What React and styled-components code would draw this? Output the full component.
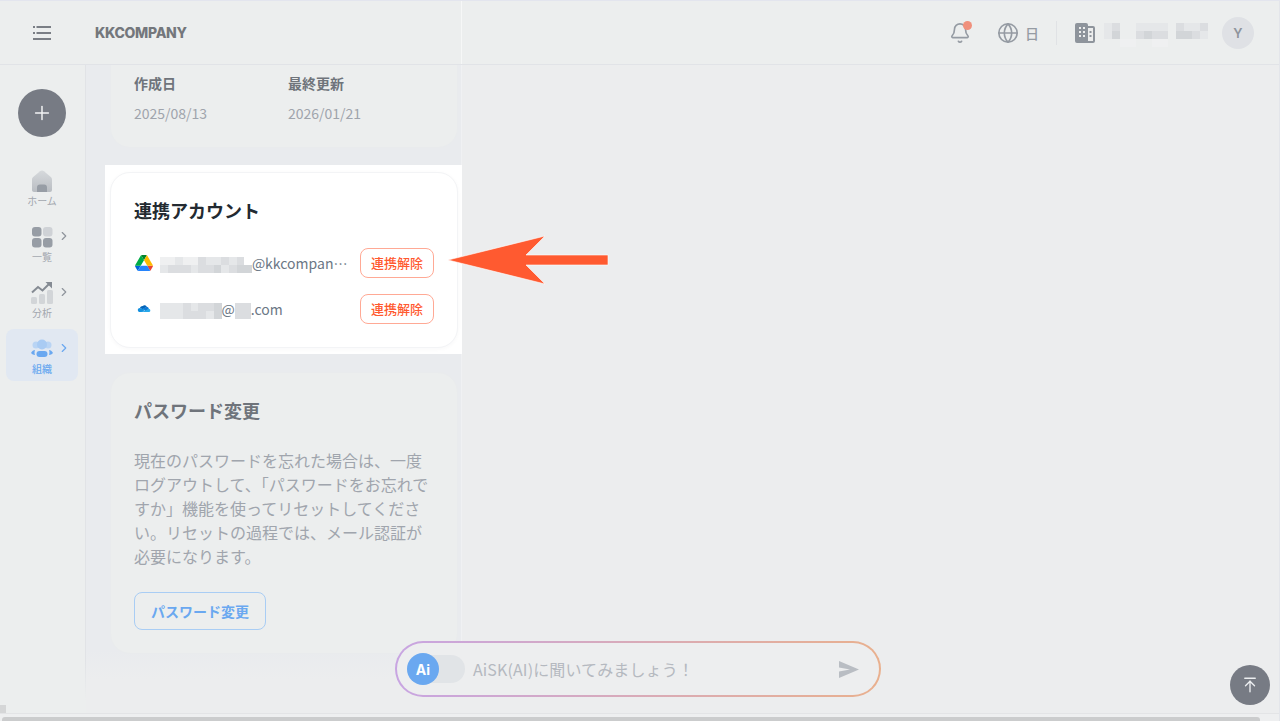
import React from 'react';
import styled, { createGlobalStyle } from 'styled-components';
import { ArrowUpToLine, Bell, ChevronRight, Globe, Plus } from 'lucide-react';

const GlobalStyle = createGlobalStyle`
    html, body {
        margin: 0;
        padding: 0;
        height: 100%;
        overflow: hidden;
        background: #eceeee;
        font-family: 'Noto Sans CJK JP', 'Noto Sans', sans-serif;
    }
    * {
        box-sizing: border-box;
    }
`;

const Page = styled.div`
    position: relative;
    height: 100vh;
    display: flex;
    flex-direction: column;
    overflow: hidden;
    border-top: 1px solid #e3e5ee;
    border-right: 1px solid #e3e5ea;
`;

// Header
const Header = styled.header`
    flex: none;
    height: 64px;
    display: flex;
    align-items: center;
    padding: 0 25px 0 33px;
    background: #eceeee;
    border-bottom: 1px solid #e1e3e7;
`;

const HeaderSeam = styled.div`
    position: absolute;
    left: 461px;
    top: 0;
    width: 1px;
    height: 63px;
    background: #f6f7f7;
`;

const Logo = styled.div`
    margin-left: 44px;
    font-family: 'Inter', sans-serif;
    font-weight: 800;
    font-size: 14px;
    letter-spacing: -0.3px;
    color: #74777c;
`;

const HeaderRight = styled.div`
    margin-left: auto;
    display: flex;
    align-items: center;
`;

const BellWrap = styled.div`
    position: relative;
    width: 22px;
    height: 22px;
    color: #959ba3;
`;

const BellDot = styled.span`
    position: absolute;
    top: -1px;
    right: -1px;
    width: 9px;
    height: 9px;
    border-radius: 50%;
    background: #f0907c;
`;

const LangBox = styled.div`
    display: flex;
    align-items: center;
    gap: 6px;
    margin-left: 26px;
    color: #959ba3;
    font-size: 14px;
    font-weight: 500;
`;

const Divider = styled.div`
    width: 1px;
    height: 24px;
    margin: 0 18px 0 17px;
    background: #e0e2e5;
`;

const CompanyName = styled.div`
    padding-top: 4px;
    line-height: 0;
`;

const Avatar = styled.div`
    width: 32px;
    height: 32px;
    margin-left: 14px;
    border-radius: 50%;
    background: #dfe1e5;
    color: #8f949c;
    font-family: 'Inter', sans-serif;
    font-size: 13px;
    font-weight: 600;
    display: flex;
    align-items: center;
    justify-content: center;
`;

// Blurred out parts
const MosaicGrid = styled.span`
    display: inline-grid;
    grid-template-columns: repeat(${props => props.$cols}, ${props => props.$cell}px);
    grid-auto-rows: ${props => props.$cellHeight}px;
    vertical-align: middle;
    margin-left: ${props => props.$gap || 0}px;
`;

const SHADES = { 0: 'transparent', 1: '#eff0f1', 2: '#e5e7e9', 3: '#dbdde0', 4: '#d2d5d8' };

const MosaicCell = styled.span`
    background: ${props => SHADES[props.$shade]};
`;

const Mosaic = ({ rows, cell = 8, cellHeight = 8, gap }) => (
    <MosaicGrid $cols={rows[0].length} $cell={cell} $cellHeight={cellHeight} $gap={gap}>
        {rows.join('').split('').map((shade, i) => (
            <MosaicCell key={i} $shade={shade} />
        ))}
    </MosaicGrid>
);

// Body
const Body = styled.div`
    flex: 1;
    min-height: 0;
    display: flex;
    background: #ecedee;
`;

const Sidebar = styled.nav`
    flex: none;
    width: 86px;
    padding-top: 24px;
    background: #eceeee;
    border-right: 1px solid;
    border-image: linear-gradient(to bottom, #e1e3e6 0, #e1e3e6 92%, #eceeee 98%) 1;
    display: flex;
    flex-direction: column;
`;

const AddButton = styled.button`
    width: 48px;
    height: 48px;
    margin: 0 0 24px 18px;
    padding: 0;
    border: none;
    border-radius: 50%;
    background: #777b84;
    color: #f3f4f5;
    display: flex;
    align-items: center;
    justify-content: center;
`;

const NavList = styled.div`
    display: flex;
    flex-direction: column;
    gap: 4px;
    padding-left: 6px;
`;

const NavItem = styled.div`
    position: relative;
    width: 72px;
    height: 52px;
    border-radius: 8px;
    background: ${props => (props.$active ? '#e1e8f2' : 'transparent')};
    display: flex;
    flex-direction: column;
    align-items: center;
    padding-top: 8px;
    color: ${props => (props.$active ? '#6aa8f0' : '#a3a7ae')};
`;

const NavIcon = styled.svg`
    display: block;
    width: 24px;
    height: 24px;
`;

const NavLabel = styled.span`
    margin-top: 1px;
    font-size: 10px;
    line-height: 14px;
    font-weight: ${props => (props.$active ? 500 : 400)};
`;

const NavChevron = styled(ChevronRight)`
    position: absolute;
    top: 12px;
    right: 7px;
    width: 14px;
    height: 14px;
    color: ${props => (props.$active ? '#6aa8f0' : '#8f949c')};
`;

const Column = styled.main`
    flex: none;
    width: 376px;
    height: 615px;
    background: linear-gradient(to bottom, #e9ebee 0, #e9ebee 95%, #ecedee 100%);
    border-right: 1px solid #f0f1f3;
    padding: 0 3px 0 24px;
    display: flex;
    flex-direction: column;
`;

const Card = styled.section`
    width: 348px;
    background: #eceeee;
    border: 1px solid #e9ebed;
    border-radius: 20px;
    padding: 24px 23px 23px;
`;

const MetaCard = styled(Card)`
    border-top: none;
    border-radius: 0 0 20px 20px;
    padding-top: 8px;
    padding-bottom: 24px;
    margin-bottom: 17px;
    display: grid;
    grid-template-columns: 150px 150px;
    column-gap: 4px;
`;

const MetaLabel = styled.div`
    font-size: 14px;
    line-height: 20px;
    font-weight: 700;
    color: #6f747b;
`;

const MetaValue = styled.div`
    margin-top: 10px;
    font-size: 14px;
    line-height: 20px;
    color: #9fa4ac;
`;

const Highlight = styled.div`
    margin: 0 0 18px -5px;
    width: 357px;
    padding: 7px 4px 6px 5px;
    background: #ffffff;
`;

const AccountCard = styled(Card)`
    background: #ffffff;
    border-color: #f3f4f6;
    box-shadow: 0 1px 4px rgba(30, 40, 60, 0.03);
`;

const CardTitle = styled.h2`
    margin: 0 0 25px;
    font-size: 18px;
    line-height: 26px;
    font-weight: 700;
    color: ${props => (props.$muted ? '#6f747b' : '#232a31')};
`;

const AccountList = styled.div`
    display: flex;
    flex-direction: column;
    gap: 16px;
`;

const AccountRow = styled.div`
    display: flex;
    align-items: center;
    height: 30px;
`;

const ServiceIcon = styled.svg`
    flex: none;
    width: 18px;
    height: 16px;
    margin: 0 7px 0 1px;
`;

const AccountMail = styled.div`
    width: 188px;
    font-size: 14px;
    line-height: 20px;
    color: #6b7785;
    white-space: nowrap;
    overflow: hidden;
    text-overflow: ellipsis;
`;

const UnlinkButton = styled.button`
    flex: none;
    width: 74px;
    height: 30px;
    margin-left: 12px;
    padding: 0;
    border: 1px solid #ffa995;
    border-radius: 8px;
    background: #ffffff;
    color: #ff5a30;
    font-family: inherit;
    font-size: 13px;
    font-weight: 500;
    line-height: 26px;
`;

const Description = styled.p`
    margin: 0 0 24px;
    width: 300px;
    font-size: 16px;
    line-height: 24px;
    color: #a0a5ad;
`;

const OutlineButton = styled.button`
    display: block;
    width: 132px;
    height: 38px;
    padding: 0;
    border: 1px solid #a9cdf4;
    border-radius: 8px;
    background: transparent;
    color: #6aa8f0;
    font-family: inherit;
    font-size: 14px;
    font-weight: 700;
`;

// Bottom scroll bar
const ScrollTrack = styled.div`
    flex: none;
    height: 8px;
    border-top: 1px solid #e3e4e6;
    background: #eeeff0;
    padding: 3px 0 0 2px;
`;

const ScrollThumb = styled.div`
    width: 1258px;
    height: 5px;
    border-radius: 3px 3px 0 0;
    background: #cbcccd;
`;

const ScrollCorner = styled.div`
    position: absolute;
    left: 0;
    top: 704px;
    width: 6px;
    height: 8px;
    background: #d5d6d7;
`;

// Things that float over the page
const Annotation = styled.svg`
    position: absolute;
    left: 448px;
    top: 232px;
    width: 164px;
    height: 54px;
`;

const ChatBar = styled.div`
    position: absolute;
    left: 395px;
    top: 640px;
    width: 486px;
    height: 56px;
    padding: 2px;
    border-radius: 28px;
    background: linear-gradient(90deg, #c8a5e2, #e9b08e);
`;

const ChatInner = styled.div`
    width: 100%;
    height: 100%;
    border-radius: 26px;
    background: #edeeef;
    display: flex;
    align-items: center;
    padding: 0 20px 0 10px;
`;

const AiToggle = styled.div`
    flex: none;
    width: 58px;
    height: 28px;
    border-radius: 14px;
    background: #e1e4e7;
    display: flex;
    align-items: center;
`;

const AiKnob = styled.div`
    width: 32px;
    height: 32px;
    border-radius: 50%;
    background: #6aa8f0;
    color: #ffffff;
    font-family: 'Inter', sans-serif;
    font-size: 14px;
    font-weight: 700;
    display: flex;
    align-items: center;
    justify-content: center;
`;

const ChatPlaceholder = styled.div`
    flex: 1;
    margin-left: 8px;
    font-size: 16px;
    letter-spacing: 0.12px;
    color: #b5b9c0;
`;

const ScrollTopButton = styled.button`
    position: absolute;
    left: 1230px;
    top: 664px;
    width: 40px;
    height: 40px;
    padding: 0;
    border: none;
    border-radius: 50%;
    background: #777b84;
    color: #eceef0;
    display: flex;
    align-items: center;
    justify-content: center;
`;

const MenuIcon = () => (
    <svg width="18" height="14" viewBox="0 0 18 14" fill="#7a7e85">
        <rect x="0" y="0" width="2" height="2" />
        <rect x="3.5" y="0" width="14.5" height="2" />
        <rect x="0" y="6" width="2" height="2" />
        <rect x="3.5" y="6" width="14.5" height="2" />
        <rect x="0" y="12" width="18" height="2" />
    </svg>
);

const BuildingIcon = () => (
    <svg width="20" height="20" viewBox="0 0 20 20">
        <path d="M2 0h9a2 2 0 0 1 2 2v1h5a2 2 0 0 1 2 2v13a2 2 0 0 1-2 2H2a2 2 0 0 1-2-2V2a2 2 0 0 1 2-2z" fill="#8e949c" />
        <g fill="#eceded">
            <rect x="4" y="4" width="2" height="2" />
            <rect x="8" y="4" width="2" height="2" />
            <rect x="4" y="8" width="2" height="2" />
            <rect x="8" y="8" width="2" height="2" />
            <rect x="4" y="12" width="2" height="2" />
            <rect x="8" y="12" width="2" height="2" />
            <rect x="13" y="5" width="5" height="13" />
        </g>
        <g fill="#8e949c">
            <rect x="14.5" y="8" width="2" height="2" />
            <rect x="14.5" y="12" width="2" height="2" />
        </g>
    </svg>
);

const HomeIcon = () => (
    <NavIcon viewBox="0 0 24 24">
        <defs>
            <linearGradient id="homeFill" x1="0" y1="0" x2="0" y2="1">
                <stop offset="0" stopColor="#d6d9dc" />
                <stop offset="1" stopColor="#b9bdc2" />
            </linearGradient>
        </defs>
        <path
            d="M2 10.500C2 9.500 2.400 8.800 3.200 8.100L10 2.300C11.200 1.300 12.800 1.300 14 2.300L20.800 8.100C21.600 8.800 22 9.500 22 10.500V21C22 22.100 21.100 23 20 23H4C2.900 23 2 22.100 2 21z"
            fill="url(#homeFill)"
        />
        <path d="M7 23v-4.500a3 3 0 0 1 3-3h4a3 3 0 0 1 3 3V23z" fill="#979da5" />
    </NavIcon>
);

const GridIcon = () => (
    <NavIcon viewBox="0 0 24 24">
        <rect x="2" y="2" width="9.5" height="9.5" rx="3" fill="#979da5" />
        <rect x="13" y="2" width="9.5" height="9.5" rx="3" fill="#cfd2d6" />
        <rect x="2" y="13" width="9.5" height="9.5" rx="3" fill="#979da5" />
        <rect x="13" y="13" width="9.5" height="9.5" rx="3" fill="#979da5" />
    </NavIcon>
);

const ChartIcon = () => (
    <NavIcon viewBox="0 0 24 24">
        <rect x="1" y="16" width="6" height="7" rx="1.5" fill="#d2d5d8" />
        <rect x="9" y="13" width="6" height="10" rx="1.5" fill="#d2d5d8" />
        <rect x="17" y="9" width="6" height="14" rx="1.5" fill="#d2d5d8" />
        <path d="M2 11.500 8 6l4.500 3.500L19 3" fill="none" stroke="#858b93" strokeWidth="2" />
        <path d="M15.500 1H22v6.500z" fill="#858b93" />
    </NavIcon>
);

const TeamIcon = () => (
    <NavIcon viewBox="0 0 24 24">
        <circle cx="6" cy="8" r="3.500" fill="#b9d4f4" />
        <circle cx="18" cy="8" r="3.500" fill="#b9d4f4" />
        <circle cx="12" cy="7.500" r="5" fill="#a9cbf3" />
        <path d="M1 16c1-2 2.500-3 4-3-.6 1.600-.6 3.400 0 5-1.600 0-3-.8-4-2zM23 16c-1-2-2.500-3-4-3 .6 1.600.6 3.400 0 5 1.600 0 3-.8 4-2z" fill="#6aa8f0" />
        <rect x="6.500" y="14" width="11" height="6" rx="3" fill="#6aa8f0" />
    </NavIcon>
);

const DriveIcon = () => (
    <ServiceIcon viewBox="0 0 87.3 78">
        <path d="m6.6 66.85 3.85 6.65c.8 1.4 1.95 2.5 3.3 3.3l13.75-23.8h-27.5c0 1.55.4 3.1 1.2 4.5z" fill="#0066da" />
        <path d="m43.65 25-13.75-23.8c-1.35.8-2.5 1.9-3.3 3.3l-25.4 44a9.06 9.06 0 0 0 -1.2 4.5h27.5z" fill="#00ac47" />
        <path d="m73.55 76.8c1.35-.8 2.5-1.9 3.3-3.3l1.6-2.75 7.65-13.25c.8-1.4 1.2-2.95 1.2-4.5h-27.502l5.852 11.5z" fill="#ea4335" />
        <path d="m43.65 25 13.75-23.8c-1.35-.8-2.9-1.2-4.5-1.2h-18.5c-1.6 0-3.15.45-4.5 1.2z" fill="#00832d" />
        <path d="m59.8 53h-32.3l-13.75 23.8c1.35.8 2.9 1.2 4.5 1.2h50.8c1.6 0 3.15-.45 4.5-1.2z" fill="#2684fc" />
        <path d="m73.4 26.5-12.7-22c-.8-1.4-1.95-2.5-3.3-3.3l-13.75 23.8 16.15 28h27.45c0-1.55-.4-3.1-1.2-4.5z" fill="#ffba00" />
    </ServiceIcon>
);

const OneDriveIcon = () => (
    <ServiceIcon viewBox="-2 -1.5 22 19">
        <path d="M7.500 4.200c1.700-1.400 4-.8 4.800 1l-5 3-3.200-1.300c.3-1.700 1.800-2.800 3.400-2.700z" fill="#0364b8" />
        <path d="M7.300 7.600 11.800 5.300c1.500-.2 2.800.8 3.100 2.300l-3.600 3.400z" fill="#0f78d4" />
        <path d="M3.900 6.900c-1.400 0-2.500 1.100-2.500 2.400 0 1.500 1.100 2.500 2.500 2.500h3.300l3-3.200z" fill="#1490df" />
        <path d="M14.800 7.600c1.100 0 1.900 1 1.900 2.100 0 1.200-.9 2.100-2.100 2.100H4.300c4-1 7.500-2.400 10.500-4.200z" fill="#28a8ea" />
    </ServiceIcon>
);

const SendIcon = () => (
    <svg width="20" height="17" viewBox="0 0 20 17" fill="#b9bdc3">
        <path d="M0 0 20 8.500 0 17 0 10.500 11 8.500 0 6.500z" />
    </svg>
);

const App = () => {
    return (
        <Page>
            <GlobalStyle />
            <Header>
                <MenuIcon />
                <Logo>KKCOMPANY</Logo>
                <HeaderRight>
                    <BellWrap>
                        <Bell size={22} strokeWidth={1.8} />
                        <BellDot />
                    </BellWrap>
                    <LangBox>
                        <Globe size={22} strokeWidth={1.8} />
                        <span>日</span>
                    </LangBox>
                    <Divider />
                    <BuildingIcon />
                    <CompanyName>
                        <Mosaic
                            gap={9}
                            rows={['2300222203223', '2400343304432', '0011001100000']}
                        />
                    </CompanyName>
                    <Avatar>Y</Avatar>
                </HeaderRight>
            </Header>
            <HeaderSeam />
            <Body>
                <Sidebar>
                    <AddButton>
                        <Plus size={22} strokeWidth={1.6} />
                    </AddButton>
                    <NavList>
                        <NavItem>
                            <HomeIcon />
                            <NavLabel>ホーム</NavLabel>
                        </NavItem>
                        <NavItem>
                            <GridIcon />
                            <NavLabel>一覧</NavLabel>
                            <NavChevron />
                        </NavItem>
                        <NavItem>
                            <ChartIcon />
                            <NavLabel>分析</NavLabel>
                            <NavChevron />
                        </NavItem>
                        <NavItem $active>
                            <TeamIcon />
                            <NavLabel $active>組織</NavLabel>
                            <NavChevron $active />
                        </NavItem>
                    </NavList>
                </Sidebar>
                <Column>
                    <MetaCard>
                        <div>
                            <MetaLabel>作成日</MetaLabel>
                            <MetaValue>2025/08/13</MetaValue>
                        </div>
                        <div>
                            <MetaLabel>最終更新</MetaLabel>
                            <MetaValue>2026/01/21</MetaValue>
                        </div>
                    </MetaCard>
                    <Highlight>
                        <AccountCard>
                            <CardTitle>連携アカウント</CardTitle>
                            <AccountList>
                                <AccountRow>
                                    <DriveIcon />
                                    <AccountMail>
                                        <Mosaic cell={7.67} rows={['112113223230', '233323342344']} />
                                        @kkcompany.com
                                    </AccountMail>
                                    <UnlinkButton>連携解除</UnlinkButton>
                                </AccountRow>
                                <AccountRow>
                                    <OneDriveIcon />
                                    <AccountMail>
                                        <Mosaic cell={7.7} rows={['22232334', '22233324']} />
                                        @<Mosaic cell={8} rows={['33', '33']} />.com
                                    </AccountMail>
                                    <UnlinkButton>連携解除</UnlinkButton>
                                </AccountRow>
                            </AccountList>
                        </AccountCard>
                    </Highlight>
                    <Card>
                        <CardTitle $muted>パスワード変更</CardTitle>
                        <Description>
                            現在のパスワードを忘れた場合は、一度ログアウトして、「パスワードをお忘れですか」機能を使ってリセットしてください。リセットの過程では、メール認証が必要になります。
                        </Description>
                        <OutlineButton>パスワード変更</OutlineButton>
                    </Card>
                </Column>
            </Body>
            <ScrollTrack>
                <ScrollThumb />
            </ScrollTrack>
            <ScrollCorner />

            <Annotation viewBox="0 0 164 54">
                <path
                    d="M0 27 97 3 78 22H160V32H78L97 51z"
                    fill="#ff5a30"
                    stroke="#ffffff"
                    strokeWidth="0.6"
                />
            </Annotation>
            <ChatBar>
                <ChatInner>
                    <AiToggle>
                        <AiKnob>Ai</AiKnob>
                    </AiToggle>
                    <ChatPlaceholder>AiSK(AI)に聞いてみましょう！</ChatPlaceholder>
                    <SendIcon />
                </ChatInner>
            </ChatBar>
            <ScrollTopButton>
                <ArrowUpToLine size={18} strokeWidth={1.8} />
            </ScrollTopButton>
        </Page>
    );
};

export default App;
